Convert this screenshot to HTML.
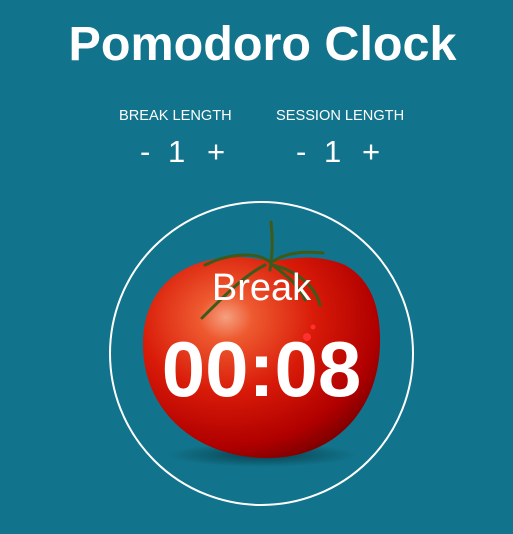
<!DOCTYPE html>
<html><head><meta charset="utf-8"><style>
html,body{margin:0;padding:0}
body{width:513px;height:534px;background:#11748c;overflow:hidden;position:relative;font-family:"Liberation Sans",sans-serif;color:#fff}
.t{position:absolute;left:0;width:525px;text-align:center;font-weight:bold;font-size:48.5px;top:16px;line-height:56px;letter-spacing:0}
.lab{position:absolute;font-size:14.6px;top:107px;line-height:18px}
.n{position:absolute;font-size:31px;top:134px;line-height:36px}
svg{position:absolute;left:0;top:0}
.br{position:absolute;left:0;width:523px;text-align:center;top:266px;font-size:38px;line-height:44px}
.tm{position:absolute;left:0;width:523px;text-align:center;top:328px;font-size:78px;font-weight:bold;line-height:82px}
</style></head><body>
<div class="t">Pomodoro Clock</div>
<div class="lab" style="left:119px">BREAK LENGTH</div>
<div class="lab" style="left:276px">SESSION LENGTH</div>
<div class="n" style="left:140px">-</div><div class="n" style="left:168px">1</div><div class="n" style="left:207px">+</div>
<div class="n" style="left:296px">-</div><div class="n" style="left:324px">1</div><div class="n" style="left:362px">+</div>
<svg width="513" height="534">
<defs>
<radialGradient id="tg" cx="0.35" cy="0.3" r="0.75">
<stop offset="0" stop-color="#f5a080"/><stop offset="0.15" stop-color="#ee5a30"/><stop offset="0.5" stop-color="#d81a08"/><stop offset="0.85" stop-color="#b00000"/><stop offset="1" stop-color="#800000"/>
</radialGradient>
<radialGradient id="sh" cx="0.5" cy="0.5" r="0.5"><stop offset="0" stop-color="#000" stop-opacity="0.45"/><stop offset="1" stop-color="#000" stop-opacity="0"/></radialGradient>
</defs>
<ellipse cx="262" cy="455" rx="95" ry="12" fill="url(#sh)"/>
<path d="M143 345 C143 285 185 258 235 257 C255 257 265 262 280 260 C300 257 320 255 345 265 C372 280 381 310 380 345 C378 410 335 458 268 458 C195 458 143 410 143 345 Z" fill="url(#tg)"/>
<g fill="none" stroke="#3d5a1a" stroke-width="3" stroke-linecap="round">
<path d="M271 222 C273 240 272 258 270 270"/>
<path d="M270 262 C255 250 225 255 205 265"/>
<path d="M272 262 C290 250 310 252 323 253"/>
<path d="M272 265 C295 270 315 285 320 305"/>
<path d="M265 265 C245 275 225 295 202 318"/>
<path d="M274 266 C285 275 300 285 305 300"/>
</g>
<circle cx="307" cy="337" r="4" fill="#ff3030"/>
<circle cx="313" cy="327" r="2.5" fill="#ff3030"/>
<circle cx="261.5" cy="353.5" r="151.5" fill="none" stroke="#fff" stroke-width="2"/>
</svg>
<div class="br">Break</div>
<div class="tm">00:08</div>
</body></html>
